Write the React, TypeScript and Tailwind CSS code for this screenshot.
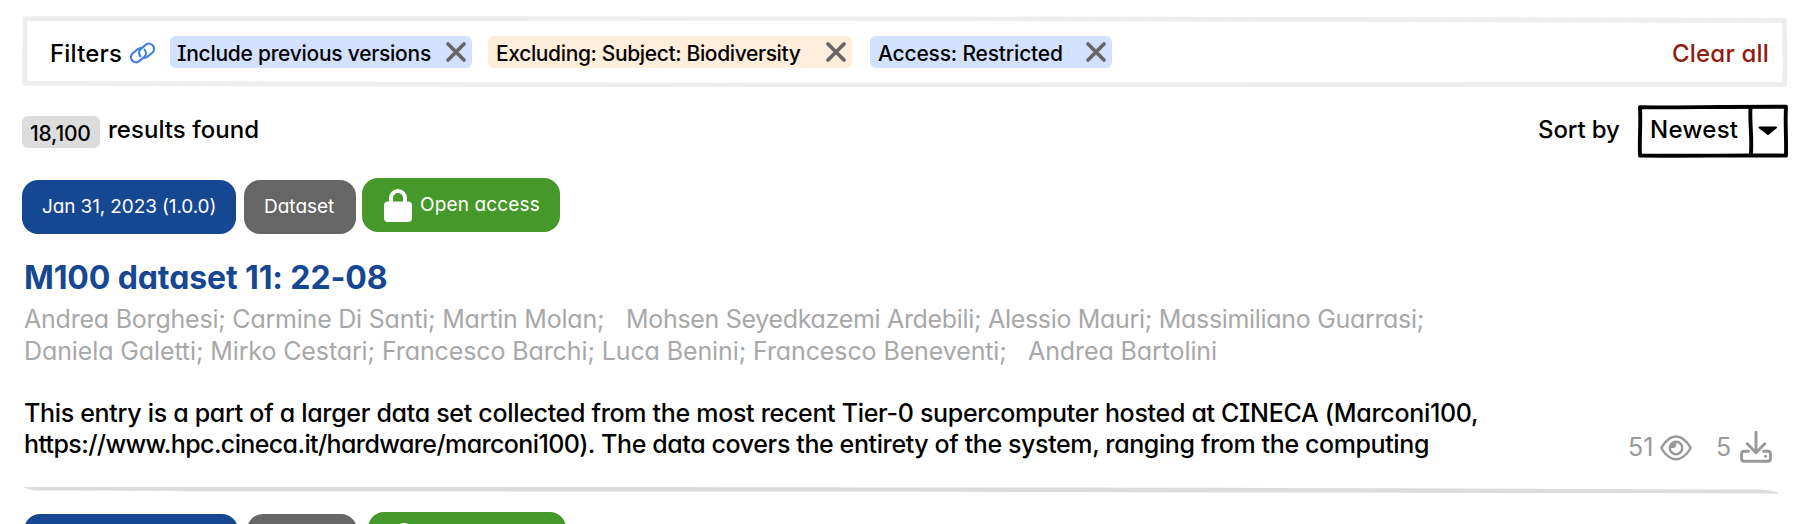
import type { ReactNode } from "react";

const CloseIcon = () => (
  <svg className="size-[22px] shrink-0" viewBox="0 0 22 22" fill="none" stroke="#666666" strokeWidth="3.7" strokeLinecap="round">
    <path d="M3 3 19 19M19 3 3 19" />
  </svg>
);

const LinkIcon = () => (
  <svg className="h-[22px] w-[27px] shrink-0" viewBox="0 0 27 22" fill="none" stroke="#3f7ee3" strokeWidth="2.100" strokeLinecap="round">
    <rect x="1.200" y="8.100" width="16.500" height="10.200" rx="5.100" transform="rotate(-40 9.450 13.200)" strokeDasharray="39.500 4.300" strokeDashoffset="30" />
    <rect x="9.300" y="3.700" width="16.500" height="10.200" rx="5.100" transform="rotate(-40 17.550 8.800)" strokeDasharray="39.500 4.300" strokeDashoffset="8" />
  </svg>
);

const LockIcon = () => (
  <svg className="h-[33px] w-[28px] shrink-0" viewBox="0 0 28 33">
    <path d="M7 16V9a7 7 0 0 1 14 0V16" fill="none" stroke="white" strokeWidth="4" />
    <rect x="0" y="12.500" width="28" height="20.500" rx="4" fill="white" />
  </svg>
);

const EyeIcon = () => (
  <svg className="h-8 w-8 shrink-0" viewBox="0 0 32 32" fill="none" stroke="#999999" strokeWidth="2.5" strokeLinejoin="round">
    <path d="M1.3 17C5 10.500 10 5.600 16 5.600S27 10.500 30.700 17C27 23.500 22 28.200 16 28.200S5 23.500 1.300 17Z" />
    <circle cx="16" cy="17" r="6.200" />
    <path d="M16.200 11.500v2.500a3 3 0 0 1-3 3h-2.800a5.700 5.700 0 0 1 5.800-5.500Z" fill="#999999" stroke="none" />
  </svg>
);

const DownloadIcon = () => (
  <svg className="h-8 w-8 shrink-0" viewBox="0 0 32 32" fill="none" stroke="#999999" strokeWidth="2.9" strokeLinecap="round" strokeLinejoin="round">
    <path d="M16 1.300v20.500M7.300 12.700 16 21.800l8.700-9.100" />
    <path d="M8.500 20.200H4.200a2.600 2.600 0 0 0-2.600 2.600v4.900a2.600 2.600 0 0 0 2.600 2.600h23.600a2.600 2.600 0 0 0 2.600-2.600v-4.900a2.600 2.600 0 0 0-2.600-2.600h-4.300" />
    <circle cx="25.500" cy="25.300" r="1.500" fill="#999999" stroke="none" />
  </svg>
);

function Chip({ className, children }: { className: string; children: ReactNode }) {
  return (
    <div className={`flex h-8 shrink-0 justify-between rounded-md text-[21px] leading-[35px] ${className}`}>
      {children}
      <div className="pt-[5px]"><CloseIcon /></div>
    </div>
  );
}

function FilterBar() {
  return (
    <div className="relative ml-[22px] h-[71px] w-[1766px] shrink-0">
      <svg className="absolute inset-0 h-full w-full" viewBox="0 0 1766 71" fill="none" stroke="#ededed" strokeWidth="4.700" strokeLinejoin="round">
        <path d="M3 2.600C300 3.200 600 1.800 900 2.800S1500 4.200 1762.500 4.400C1762 25 1764 45 1762.500 68.300C1300 67.800 1000 69.400 700 69S200 67.300 2.600 67.300C2.200 45 3.600 25 3 2.600Z" />
      </svg>
      <div className="relative flex pt-5 pr-[19px] pl-[28px]">
        <span className="w-[79px] text-2xl leading-[35px] tracking-[0.2px]">Filters</span>
        <div className="mr-[14px] pt-[6px]"><LinkIcon /></div>
        <Chip className="w-[302px] bg-[#d1e1ff] pr-[5px] pl-[7px] tracking-[-0.27px]">Include previous versions</Chip>
        <Chip className="ml-4 w-[364px] bg-[#ffeedc] pr-[5px] pl-[8px] tracking-[-0.37px]">Excluding: Subject: Biodiversity</Chip>
        <Chip className="ml-[18px] w-[242px] bg-[#d1e1ff] pr-[5px] pl-[8px] tracking-[-0.18px]">Access: Restricted</Chip>
        <span className="ml-auto text-2xl leading-[35px] tracking-[0.2px] text-[#8f1d0f]">Clear all</span>
      </div>
    </div>
  );
}

function ResultsBar() {
  return (
    <div className="mt-4 ml-[22px] flex h-14 w-[1766px] shrink-0 text-2xl">
      <div className="flex pt-[13px]">
        <span className="h-8 w-[78px] rounded-md bg-[#dddddd] pl-2 text-[21px] leading-[35px] tracking-[-0.2px]">18,100</span>
        <span className="ml-2 leading-[27px] tracking-[0.03px]">results found</span>
      </div>
      <span className="mt-[13px] ml-auto w-[99px] leading-[27px] tracking-[-0.1px]">Sort by</span>
      <div className="relative h-[56px] w-[151px]">
        <svg className="absolute inset-0 h-full w-full" viewBox="0 0 151 56" fill="none" stroke="black" strokeWidth="3.900" strokeLinejoin="round">
          <path d="M3 4.300C40 4.700 80 3.600 149 3.700C148 20 149.500 36 149 52.600C100 52 50 53.200 3 52.600C2.200 35 4 22 3 4.300Z" />
          <path d="M113.500 4.500C112.500 20 115.500 36 113.800 52" />
          <path d="M122.500 24.500 139 24.500 131 31Z" fill="black" strokeWidth="2" />
        </svg>
        <span className="relative block pt-[13px] pl-[13px] leading-[27px] tracking-[0.3px]">Newest</span>
      </div>
    </div>
  );
}

function AccessPill({ className, children }: { className: string; children?: ReactNode }) {
  return (
    <span className={`flex h-[54px] rounded-[16px] bg-[#47982a] pl-[22px] leading-[53px] tracking-[0.15px] ${className}`}>
      <span className="mr-[8px] pt-[11px]"><LockIcon /></span>
      {children}
    </span>
  );
}

export default function App() {
  return (
    <main className="flex h-[524px] w-[1806px] flex-col overflow-hidden bg-white pt-4 font-['Inter',sans-serif] font-medium whitespace-nowrap text-black [font-feature-settings:'cv11','cv08']">
      <FilterBar />
      <ResultsBar />
      <div className="mt-[19px] ml-[22px] flex h-14 shrink-0 text-[19px] font-normal text-white">
        <span className="mt-0.5 h-[54px] w-[214px] rounded-[16px] bg-[#164793] pl-5 leading-[53px] tracking-[-0.12px]">Jan 31, 2023 (1.0.0)</span>
        <span className="mt-0.5 ml-2 h-[54px] w-28 rounded-[16px] bg-[#666666] pl-5 leading-[53px]">Dataset</span>
        <AccessPill className="ml-1.5 w-[198px]">Open access</AccessPill>
      </div>
      <h2 className="mt-[24px] ml-6 h-10 shrink-0 text-[32px] leading-10 font-bold tracking-[-0.12px] text-[#164793]">M100 dataset 11: 22-08</h2>
      <div className="mt-[5px] ml-6 shrink-0 text-[25px] leading-8 font-normal text-[#a8a8a8]">
        <div className="flex">
          <span className="w-[602px] tracking-[-0.22px]">Andrea Borghesi; Carmine Di Santi; Martin Molan;</span>
          <span className="tracking-[-0.315px]">Mohsen Seyedkazemi Ardebili; Alessio Mauri; Massimiliano Guarrasi;</span>
        </div>
        <div className="flex">
          <span className="w-[1004px] tracking-[-0.11px]">Daniela Galetti; Mirko Cestari; Francesco Barchi; Luca Benini; Francesco Beneventi;</span>
          <span className="tracking-[-0.1px]">Andrea Bartolini</span>
        </div>
      </div>
      <div className="mt-[31px] ml-6 flex h-[62px] w-[1748px] shrink-0 text-[25px]">
        <div className="leading-[31px]">
          <p className="tracking-[-0.31px]">This entry is a part of a larger data set collected from the most recent Tier-0 supercomputer hosted at CINECA (Marconi100,</p>
          <p className="tracking-[-0.39px]"><span className="tracking-[-0.62px]">https://www.hpc.cineca.it/hardware/marconi100).</span> The data covers the entirety of the system, ranging from the computing</p>
        </div>
        <div className="mt-[33px] ml-auto flex h-8 leading-8 font-normal text-[#999999]">
          <span className="w-8">51</span>
          <EyeIcon />
          <span className="ml-6 w-6">5</span>
          <DownloadIcon />
        </div>
      </div>
      <svg className="mt-[26px] ml-6 h-2 w-[1754px] shrink-0" viewBox="0 0 1754 8">
        <path d="M0 1C400 1 1100 .8 1735 3.600Q1749 4.500 1754 6.500V7.500C1300 6.800 900 5.400 500 5.400S150 5 14 4.500Q5 4 0 1.500Z" fill="#dcdcdc" />
      </svg>
      <div className="mt-[18px] ml-6 flex h-14 shrink-0">
        <span className="mt-0.5 h-[54px] w-[214px] rounded-[16px] bg-[#164793]" />
        <span className="mt-0.5 ml-[9px] h-[54px] w-[110px] rounded-[16px] bg-[#666666]" />
        <AccessPill className="ml-[11px] w-[198px]" />
      </div>
    </main>
  );
}
